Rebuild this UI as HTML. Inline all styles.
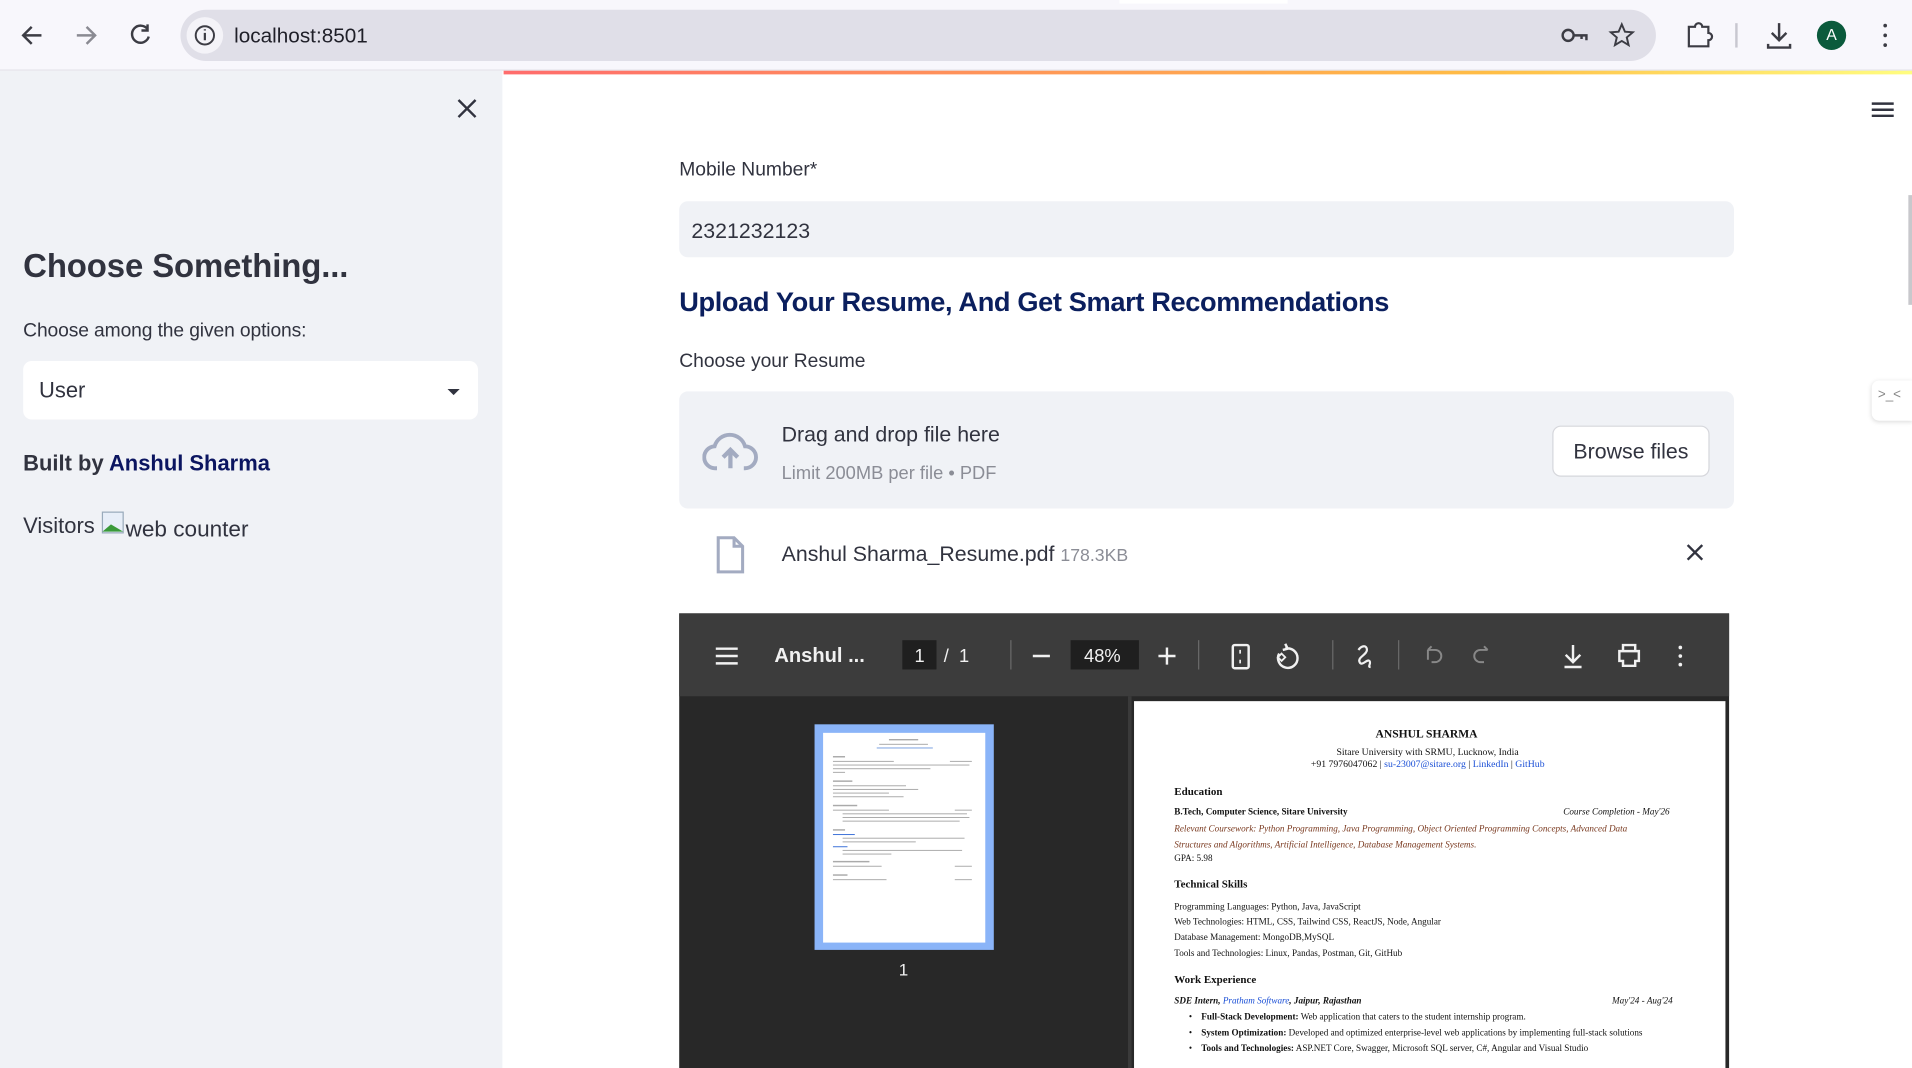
<!DOCTYPE html>
<html><head><meta charset="utf-8"><style>
html,body{margin:0;padding:0;width:1912px;height:1068px;overflow:hidden;background:#fff}
#s{position:absolute;left:0;top:0;width:1568px;height:876px;transform:scale(1.21939);transform-origin:0 0;font-family:"Liberation Sans",sans-serif;color:#31333f;overflow:hidden}
.a{position:absolute;white-space:nowrap}
.pdf{font-family:"Liberation Serif",serif;color:#111;font-size:7.5px}
.pdf .a{position:absolute}
.bl{color:#1a4fd6}
</style></head><body><div id="s">
<div class="a" style="left:0;top:0;width:1568px;height:57px;background:#f8f7fc;border-bottom:1px solid #e2e1e8"></div>
<div class="a" style="left:918px;top:0;width:138px;height:3px;background:#fff"></div>
<div class="a" style="left:148px;top:8px;width:1210px;height:42px;border-radius:21px;background:#e0dfe8"></div>
<div class="a" style="left:153px;top:14px;width:30px;height:30px;border-radius:15px;background:#f4f3f8"></div>
<svg class="a" style="left:0;top:0" width="1568" height="57" fill="none" stroke="#3c3c44" stroke-width="2">
<path d="M34 29H19M26 22l-7 7 7 7"/>
<path d="M63 29h15M71 22l7 7-7 7" stroke="#8a8a92"/>
<path d="M121 24a7 7 0 1 0 1 6M121 20v5h-5"/>
<circle cx="168" cy="29" r="7.5" stroke-width="1.6"/><path d="M168 27v6M168 24v1" stroke-width="1.8"/>
<circle cx="1286" cy="29" r="4.5"/><path d="M1290 29h11v4M1297 29v3"/>
<path d="M1330 20l2.6 6 6.4.5-4.9 4.2 1.5 6.3-5.6-3.4-5.6 3.4 1.5-6.3-4.9-4.2 6.4-.5z" stroke-width="1.6"/>
<path d="M1385 22h5a3 3 0 0 1 6 0h5v5a3 3 0 0 1 0 6v5h-16z" stroke-width="1.8"/>
<path d="M1424 19v20" stroke="#c8c7d0"/>
<path d="M1459 19v14M1453 27l6 6 6-6M1450 36v3h18v-3" stroke-width="2"/>
<circle cx="1546" cy="21" r="1.5" fill="#3c3c44" stroke="none"/><circle cx="1546" cy="29" r="1.5" fill="#3c3c44" stroke="none"/><circle cx="1546" cy="37" r="1.5" fill="#3c3c44" stroke="none"/>
</svg>
<div class="a" style="left:192px;top:20px;font-size:17px;color:#1f1f28">localhost:8501</div>
<div class="a" style="left:1490px;top:17px;width:24px;height:24px;border-radius:12px;background:#0b5a3c;color:#fff;font-size:13px;text-align:center;line-height:24px">A</div>

<div class="a" style="left:0;top:58px;width:412px;height:818px;background:#f0f2f6"></div>
<svg class="a" style="left:374px;top:80px" width="18" height="18" stroke="#31333f" stroke-width="2"><path d="M2 2l14 14M16 2L2 16"/></svg>
<div class="a" style="left:19px;top:203px;font-size:27px;font-weight:bold;letter-spacing:-0.1px">Choose Something...</div>
<div class="a" style="left:19px;top:263px;font-size:15.8px;letter-spacing:-0.1px">Choose among the given options:</div>
<div class="a" style="left:19px;top:296px;width:373px;height:48px;background:#fff;border-radius:7px"></div>
<div class="a" style="left:32px;top:310px;font-size:18px">User</div>
<div class="a" style="left:367px;top:319px;width:0;height:0;border-left:5px solid transparent;border-right:5px solid transparent;border-top:5px solid #31333f"></div>
<div class="a" style="left:19px;top:370px;font-size:18px;font-weight:bold">Built by <span style="color:#0b1560">Anshul Sharma</span></div>
<div class="a" style="left:19px;top:421px;font-size:18px">Visitors</div>
<svg class="a" style="left:83px;top:419px" width="20" height="20"><rect x="1" y="1" width="17" height="17" fill="#e7eef8" stroke="#9ab"/><path d="M1 17l7-6 10 6z" fill="#3a9a3a"/></svg>
<div class="a" style="left:103px;top:423px;font-size:18.5px">web counter</div>

<div class="a" style="left:413px;top:58px;width:1155px;height:3px;background:linear-gradient(90deg,#ff6c6c,#ffbd45 70%,#fffd80)"></div>
<svg class="a" style="left:1534px;top:82px" width="20" height="16" stroke="#31333f" stroke-width="2"><path d="M1 3h18M1 8h18M1 13h18"/></svg>
<div class="a" style="left:1565px;top:160px;width:3px;height:90px;background:#c8c8cc"></div>
<div class="a" style="left:1535px;top:312px;width:33px;height:33px;background:#fff;border-radius:6px 0 0 6px;box-shadow:0 1px 4px rgba(0,0,0,.15)"></div>
<div class="a" style="left:1540px;top:318px;font-size:11px;color:#888">&gt;_&lt;</div>

<div class="a" style="left:557px;top:131px;font-size:15.8px">Mobile Number*</div>
<div class="a" style="left:557px;top:165px;width:865px;height:46px;background:#f0f2f6;border-radius:7px"></div>
<div class="a" style="left:567px;top:179px;font-size:17.5px">2321232123</div>
<div class="a" style="left:557px;top:235px;font-size:22.3px;font-weight:bold;color:#0b1f5e;letter-spacing:-0.3px">Upload Your Resume, And Get Smart Recommendations</div>
<div class="a" style="left:557px;top:288px;font-size:15.8px">Choose your Resume</div>
<div class="a" style="left:557px;top:321px;width:865px;height:96px;background:#f0f2f6;border-radius:7px"></div>
<svg class="a" style="left:576px;top:352px" width="46" height="36" fill="none" stroke="#a3abc1" stroke-width="3.2"><path d="M12 32H11a9 9 0 0 1-1-18 13 13 0 0 1 25 0 9 9 0 0 1 0 18h-1"/><path d="M23 32V18M17 23l6-6 6 6" stroke-width="3.5"/></svg>
<div class="a" style="left:641px;top:346px;font-size:17.5px">Drag and drop file here</div>
<div class="a" style="left:641px;top:380px;font-size:15px;color:#8b8d96">Limit 200MB per file • PDF</div>
<div class="a" style="left:1273px;top:349px;width:129px;height:42px;background:#fff;border:1px solid #d6d7dc;border-radius:7px;box-sizing:border-box;font-size:17.5px;text-align:center;line-height:40px">Browse files</div>
<svg class="a" style="left:586px;top:439px" width="26" height="32" fill="none" stroke="#a3abc1" stroke-width="2.5"><path d="M3 2h13l7 7v21H3z"/><path d="M16 2v7h7"/></svg>
<div class="a" style="left:641px;top:444px;font-size:17.5px">Anshul Sharma_Resume.pdf <span style="font-size:14.5px;color:#8b8d96">178.3KB</span></div>
<svg class="a" style="left:1382px;top:445px" width="16" height="16" stroke="#31333f" stroke-width="2"><path d="M2 2l12 12M14 2L2 14"/></svg>

<div class="a" style="left:557px;top:503px;width:861px;height:373px;background:#282828"></div>
<div class="a" style="left:557px;top:503px;width:861px;height:68px;background:#3c3c3c"></div>
<svg class="a" style="left:557px;top:503px" width="861" height="68" fill="none" stroke="#f1f1f1" stroke-width="2">
<path d="M30 29h18M30 35h18M30 41h18"/>
<rect x="183" y="22" width="28" height="24" fill="#1f1f1f" stroke="none"/>
<path d="M272 22v24M426 22v24M536 22v24M590 22v24" stroke="#6a6a6a" stroke-width="1"/>
<path d="M290 35h14"/>
<rect x="321" y="22" width="56" height="24" fill="#1f1f1f" stroke="none"/>
<path d="M393 35h14M400 28v14"/>
<rect x="454" y="26" width="13" height="19" rx="1.5"/><path d="M460 30v3M460 38v3" stroke-width="1.4"/>
<path d="M497 29a8 8 0 1 1-5 4M497 25l2 4-4 1"/><path d="M494 33l3 3-3 3-3-3z" stroke-width="1.5"/>
<path d="M557 30c3-4 7-4 7 0s-8 6-6 10 6-3 8-1-2 5 1 5" stroke-width="1.8"/>
<path d="M614 30v8M614 30h6a5 5 0 0 1 0 10h-3M614 30l3-3" stroke="#888" stroke-width="1.6"/>
<path d="M663 30h-6a5 5 0 0 0 0 10h3M663 30l-3-3" stroke="#888" stroke-width="1.6"/>
<path d="M733 26v14M727 34l6 6 6-6M726 44h14"/>
<path d="M771 31h16v8h-3v4h-10v-4h-3zM774 31v-5h10v5"/>
<circle cx="821" cy="28" r="1.5" fill="#f1f1f1" stroke="none"/><circle cx="821" cy="35" r="1.5" fill="#f1f1f1" stroke="none"/><circle cx="821" cy="42" r="1.5" fill="#f1f1f1" stroke="none"/>
</svg>
<div class="a" style="left:635px;top:529px;font-size:16.5px;font-weight:bold;color:#f1f1f1">Anshul ...</div>
<div class="a" style="left:750px;top:530px;font-size:15px;color:#f1f1f1">1</div>
<div class="a" style="left:774px;top:530px;font-size:15px;color:#f1f1f1">/ &nbsp;1</div>
<div class="a" style="left:889px;top:530px;font-size:15px;color:#f1f1f1">48%</div>
<div class="a" style="left:925px;top:571px;width:3px;height:305px;background:#3a3a3a"></div>
<div class="a" style="left:668px;top:594px;width:147px;height:185px;background:#8ab4f8"></div>
<div class="a" style="left:675px;top:601px;width:133px;height:172px;background:#fff"></div>
<svg class="a" style="left:683px;top:606px" width="118" height="130"><g fill="#aaa"><rect x="46" y="0" width="24" height="1.2"/><rect x="38" y="4" width="40" height="0.8"/><rect x="36" y="7" width="46" height="0.8" fill="#7aa0e0"/>
<rect x="0" y="14" width="10" height="1.2"/><rect x="0" y="18" width="50" height="0.8"/><rect x="96" y="18" width="18" height="0.8"/><rect x="0" y="21" width="112" height="0.8"/><rect x="0" y="24" width="80" height="0.8"/><rect x="0" y="27" width="10" height="0.8"/>
<rect x="0" y="34" width="16" height="1.2"/><rect x="0" y="38" width="60" height="0.8"/><rect x="0" y="41" width="70" height="0.8"/><rect x="0" y="44" width="46" height="0.8"/><rect x="0" y="47" width="58" height="0.8"/>
<rect x="0" y="54" width="20" height="1.2"/><rect x="0" y="58" width="46" height="0.8"/><rect x="100" y="58" width="14" height="0.8"/><rect x="8" y="61" width="102" height="0.8"/><rect x="8" y="64" width="104" height="0.8"/><rect x="8" y="67" width="96" height="0.8"/>
<rect x="0" y="74" width="10" height="1.2"/><rect x="0" y="78" width="18" height="0.8" fill="#3a6fd8"/><rect x="8" y="81" width="100" height="0.8"/><rect x="8" y="84" width="60" height="0.8"/><rect x="0" y="88" width="12" height="0.8" fill="#3a6fd8"/><rect x="8" y="91" width="98" height="0.8"/><rect x="8" y="94" width="40" height="0.8"/>
<rect x="0" y="100" width="30" height="1.2"/><rect x="0" y="104" width="40" height="0.8"/><rect x="100" y="104" width="14" height="0.8"/><rect x="0" y="111" width="12" height="1.2"/><rect x="0" y="115" width="44" height="0.8"/><rect x="100" y="115" width="14" height="0.8"/></g></svg>
<div class="a" style="left:737px;top:787px;font-size:14px;color:#f1f1f1">1</div>
<div class="a" style="left:930px;top:575px;width:485px;height:301px;background:#fff"></div>
<div class="pdf">
<div class="a" style="left:1128px;top:598px;font-size:9.5px;font-weight:bold">ANSHUL SHARMA</div>
<div class="a" style="left:1096px;top:612px;font-size:8px">Sitare University with SRMU, Lucknow, India</div>
<div class="a" style="left:1075px;top:622px;font-size:8px">+91 7976047062 | <span class="bl">su-23007@sitare.org</span> | <span class="bl">LinkedIn</span> | <span class="bl">GitHub</span></div>
<div class="a" style="left:963px;top:644px;font-size:9px;font-weight:bold">Education</div>
<div class="a" style="left:963px;top:661px;font-weight:bold">B.Tech, Computer Science, Sitare University</div>
<div class="a" style="left:1282px;top:661px;font-style:italic">Course Completion - May'26</div>
<div class="a" style="left:963px;top:675px;font-style:italic;color:#7a3a20">Relevant Coursework: Python Programming, Java Programming, Object Oriented Programming Concepts, Advanced Data</div>
<div class="a" style="left:963px;top:688px;font-style:italic;color:#7a3a20">Structures and Algorithms, Artificial Intelligence, Database Management Systems.</div>
<div class="a" style="left:963px;top:699px">GPA: 5.98</div>
<div class="a" style="left:963px;top:720px;font-size:9px;font-weight:bold">Technical Skills</div>
<div class="a" style="left:963px;top:739px">Programming Languages: Python, Java, JavaScript</div>
<div class="a" style="left:963px;top:751px">Web Technologies: HTML, CSS, Tailwind CSS, ReactJS, Node, Angular</div>
<div class="a" style="left:963px;top:764px">Database Management: MongoDB,MySQL</div>
<div class="a" style="left:963px;top:777px">Tools and Technologies: Linux, Pandas, Postman, Git, GitHub</div>
<div class="a" style="left:963px;top:798px;font-size:9px;font-weight:bold">Work Experience</div>
<div class="a" style="left:963px;top:816px;font-style:italic;font-weight:bold">SDE Intern, <span class="bl" style="font-weight:normal">Pratham Software</span>, Jaipur, Rajasthan</div>
<div class="a" style="left:1322px;top:816px;font-style:italic">May'24 - Aug'24</div>
<div class="a" style="left:975px;top:829px">•&nbsp;&nbsp;&nbsp; <b>Full-Stack Development:</b> Web application that caters to the student internship program.</div>
<div class="a" style="left:975px;top:842px">•&nbsp;&nbsp;&nbsp; <b>System Optimization:</b> Developed and optimized enterprise-level web applications by implementing full-stack solutions</div>
<div class="a" style="left:975px;top:855px">•&nbsp;&nbsp;&nbsp; <b>Tools and Technologies:</b> ASP.NET Core, Swagger, Microsoft SQL server, C#, Angular and Visual Studio</div>
</div>
</div></body></html>
